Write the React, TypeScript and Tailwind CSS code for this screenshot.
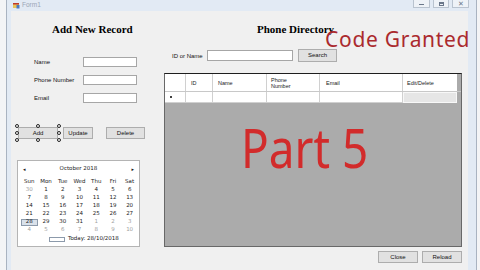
import React from "react";

const weeks: [number, boolean][][] = [
  [[30, true], [1, false], [2, false], [3, false], [4, false], [5, false], [6, false]],
  [[7, false], [8, false], [9, false], [10, false], [11, false], [12, false], [13, false]],
  [[14, false], [15, false], [16, false], [17, false], [18, false], [19, false], [20, false]],
  [[21, false], [22, false], [23, false], [24, false], [25, false], [26, false], [27, false]],
  [[28, false], [29, false], [30, false], [31, false], [1, true], [2, true], [3, true]],
  [[4, true], [5, true], [6, true], [7, true], [8, true], [9, true], [10, true]],
];

function Btn({ label, w }: { label: string; w: string }) {
  return (
    <div className={`${w} h-[12px] bg-[#e1e1e1] border border-[#adadad] flex items-center justify-center text-[6px] text-[#111]`}>
      {label}
    </div>
  );
}

function Field({ label }: { label: string }) {
  return (
    <div className="flex items-center h-[10px]">
      <div className="w-[72px] pl-[23px] text-[6px] text-[#111] leading-none">{label}</div>
      <div className="w-[54px] h-[10px] bg-white border border-[#a6a6a6]" />
    </div>
  );
}

function Handle({ cls }: { cls: string }) {
  return <div className={`absolute w-[4px] h-[4px] rounded-full bg-white border border-[#222] ${cls}`} />;
}

export default function App() {
  return (
    <div className="w-[480px] h-[270px] overflow-hidden bg-[#f3f4f6] relative font-['Liberation_Sans',Arial,sans-serif]">
      <div className="ml-[6px] w-[471px] h-[280px] border-l border-r border-[#a9b3c1] bg-[#e2eaf4] flex flex-col">
        {/* title bar */}
        <div className="h-[11px] flex items-start">
          <div className="flex items-center pl-[6px] pt-[2px] gap-[2px]">
            <svg width="7" height="7" viewBox="0 0 7 7">
              <rect x="0" y="1" width="6" height="5" fill="#e8c35a" />
              <rect x="0" y="1" width="6" height="1.5" fill="#c0392b" />
              <rect x="3.5" y="3" width="3" height="3.5" fill="#4a78c2" />
            </svg>
            <span className="text-[6.5px] leading-none text-[#9aa6b6]">Form1</span>
          </div>
          <div className="ml-auto mr-[7px] flex gap-[3px]">
            <div className="w-[17px] h-[8px] border border-t-0 border-[#b9c3cf] bg-[#eef2f7] flex items-center justify-center">
              <div className="w-[5px] h-[1px] bg-[#6a778a] mt-[2px]" />
            </div>
            <div className="w-[16px] h-[8px] border border-t-0 border-[#b9c3cf] bg-[#eef2f7] flex items-center justify-center">
              <div className="w-[5px] h-[4px] border border-[#6a778a] border-t-2" />
            </div>
            <div className="w-[17px] h-[8px] border border-t-0 border-[#b9c3cf] bg-[#eef2f7] flex items-center justify-center text-[7px] leading-none text-[#6a778a]">
              ✕
            </div>
          </div>
        </div>
        {/* client */}
        <div className="h-[259px] ml-[4px] mr-[8px] bg-[#f0f0f0] flex">
          {/* left column */}
          <div className="w-[153px] flex flex-col">
            <div className="mt-[12px] pl-[41px] h-[13px] leading-[13px] text-[11px] font-bold font-['Liberation_Serif',serif] text-black">
              Add New Record
            </div>
            <div className="mt-[21px] flex flex-col gap-[8px]">
              <Field label="Name" />
              <Field label="Phone Number" />
              <Field label="Email" />
            </div>
            <div className="mt-[24px] pl-[7px] flex items-center">
              <div className="relative">
                <Btn label="Add" w="w-[40px]" />
                <Handle cls="-left-[3px] -top-[3px]" />
                <Handle cls="left-[18px] -top-[3px]" />
                <Handle cls="-right-[3px] -top-[3px]" />
                <Handle cls="-left-[3px] top-[4px]" />
                <Handle cls="-right-[3px] top-[4px]" />
                <Handle cls="-left-[3px] -bottom-[3px]" />
                <Handle cls="left-[18px] -bottom-[3px]" />
                <Handle cls="-right-[3px] -bottom-[3px]" />
              </div>
              <div className="ml-[5px]">
                <Btn label="Update" w="w-[30px]" />
              </div>
              <div className="ml-[13px]">
                <Btn label="Delete" w="w-[39px]" />
              </div>
            </div>
            {/* calendar */}
            <div className="mt-[21px] ml-[6px] w-[123px] h-[87px] bg-white border border-[#b4b4b4] flex flex-col text-[#1a1a1a] font-['DejaVu_Sans',sans-serif]">
              <div className="mt-[4px] h-[8px] flex items-center px-[5px] text-[5.5px] leading-none">
                <span className="text-[5px]">◂</span>
                <span className="flex-1 text-center">October 2018</span>
                <span className="text-[5px]">▸</span>
              </div>
              <div className="mt-[5px] ml-[3px] w-[117px] grid grid-cols-7 h-[8px] items-center text-[5.5px] leading-none text-center">
                {["Sun", "Mon", "Tue", "Wed", "Thu", "Fri", "Sat"].map((d) => (
                  <span key={d}>{d}</span>
                ))}
              </div>
              <div className="ml-[3px] w-[117px] flex flex-col">
                {weeks.map((wk, i) => (
                  <div key={i} className="grid grid-cols-7 h-[8px] items-center text-[5.5px] leading-none text-center">
                    {wk.map(([n, g], j) => (
                      <span
                        key={j}
                        className={
                          i === 4 && j === 0
                            ? "h-[7px] flex items-center justify-center bg-[#d9e1ea] border border-[#8c9aab]"
                            : g
                            ? "text-[#a0a0a0]"
                            : ""
                        }
                      >
                        {n}
                      </span>
                    ))}
                  </div>
                ))}
              </div>
              <div className="mt-[1px] h-[8px] flex items-center pl-[31px] gap-[3px] text-[5.5px] leading-none">
                <div className="w-[16px] h-[5px] border border-[#8c9aab]" />
                <span>Today: 28/10/2018</span>
              </div>
            </div>
          </div>
          {/* right column */}
          <div className="flex-1 flex flex-col">
            <div className="mt-[12px] pl-[93px] h-[13px] leading-[13px] text-[11px] font-bold font-['Liberation_Serif',serif] text-black">
              Phone Directory
            </div>
            <div className="mt-[13px] h-[13px] flex items-center">
              <div className="w-[43px] pl-[8px] text-[6px] leading-none text-[#111]">ID or Name</div>
              <div className="w-[86px] h-[11px] bg-white border border-[#a6a6a6]" />
              <div className="ml-[5px] w-[39px] h-[13px] bg-[#e1e1e1] border border-[#adadad] flex items-center justify-center text-[6px] text-[#111]">
                Search
              </div>
            </div>
            {/* grid */}
            <div className="mt-[11px] w-[298px] h-[174px] border border-[#686868] border-t-[#1e1e1e] bg-[#ababab] flex flex-col">
              <div className="flex h-[17px] text-[5.5px] leading-[6px] text-[#222]">
                <div className="w-[21px] bg-white border-r border-[#d0d0d0]" />
                <div className="w-[27px] bg-white border-r border-[#d0d0d0] pl-[5px] flex items-center">ID</div>
                <div className="w-[54px] bg-white border-r border-[#d0d0d0] pl-[5px] flex items-center">Name</div>
                <div className="w-[53px] bg-white border-r border-[#d0d0d0] pl-[4px] flex items-center">
                  Phone
                  <br />
                  Number
                </div>
                <div className="w-[83px] bg-white border-r border-[#d0d0d0] pl-[6px] flex items-center">Email</div>
                <div className="w-[54px] bg-white pl-[4px] flex items-center">Edit/Delete</div>
              </div>
              <div className="flex h-[12px] border-t border-[#c8c8c8]">
                <div className="w-[21px] bg-white border-r border-b border-[#d0d0d0] flex items-center pl-[5px]">
                  <div className="w-[2px] h-[2px] bg-black rounded-full" />
                </div>
                <div className="w-[27px] bg-white border-r border-b border-[#d0d0d0]" />
                <div className="w-[54px] bg-white border-r border-b border-[#d0d0d0]" />
                <div className="w-[53px] bg-white border-r border-b border-[#d0d0d0]" />
                <div className="w-[83px] bg-white border-r border-b border-[#d0d0d0]" />
                <div className="w-[54px] bg-[#e6e6e6] border border-[#f8f8f8]" />
              </div>
            </div>
            <div className="mt-[4px] pr-[6px] flex justify-end gap-[4px]">
              <Btn label="Close" w="w-[40px]" />
              <Btn label="Reload" w="w-[40px]" />
            </div>
          </div>
        </div>
      </div>
      {/* overlays */}
      <div className="absolute left-[325px] top-[29px] text-[21px] leading-[21px] tracking-[0.7px] text-[#ab2a2e] font-['Noto_Sans',sans-serif] whitespace-nowrap">
        Code Granted
      </div>
      <div className="absolute left-[241px] top-[120px] origin-left scale-x-[0.85] text-[54px] leading-[54px] text-[#d22b2b] font-['Noto_Sans',sans-serif] whitespace-nowrap">
        Part 5
      </div>
    </div>
  );
}
